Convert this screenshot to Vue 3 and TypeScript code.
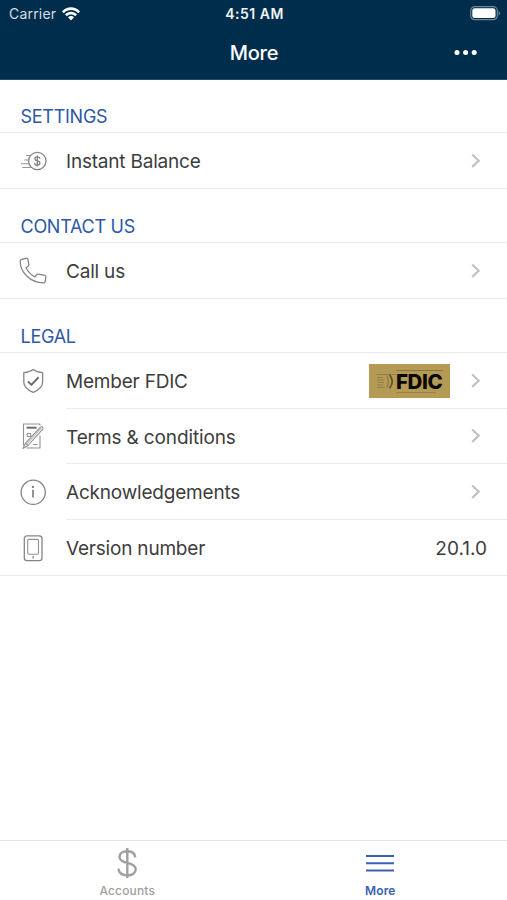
<script setup lang="ts">
type Icon = 'balance' | 'phone' | 'shield' | 'terms' | 'info' | 'device'

interface Item {
  label: string
  icon: Icon
  key: string
  badge?: boolean
  value?: string
}

interface Section {
  title: string
  key: string
  items: Item[]
}

const sections: Section[] = [
  { title: 'SETTINGS', key: 'settings', items: [{ label: 'Instant Balance', icon: 'balance', key: 'instant' }] },
  { title: 'CONTACT US', key: 'contact', items: [{ label: 'Call us', icon: 'phone', key: 'call' }] },
  {
    title: 'LEGAL',
    key: 'legal',
    items: [
      { label: 'Member FDIC', icon: 'shield', key: 'fdic', badge: true },
      { label: 'Terms & conditions', icon: 'terms', key: 'terms' },
      { label: 'Acknowledgements', icon: 'info', key: 'ack' },
      { label: 'Version number', icon: 'device', key: 'version', value: '20.1.0' },
    ],
  },
]
</script>

<template>
  <div class="screen">
    <header class="header">
      <div class="status">
        <div class="carrier">
          <span class="carrier-name">Carrier</span>
          <svg class="wifi" width="18" height="14" viewBox="0 0 18 14">
            <path d="M0 4.4C5-1.1 13-1.1 18 4.4L16.2 6.3C12.2 2 5.8 2 1.8 6.3Z" />
            <path d="M3 7.3C6.3 3.9 11.7 3.9 15 7.3L13.2 9.2C10.9 6.8 7.1 6.8 4.8 9.2Z" />
            <path d="M6 10.3C7.6 8.7 10.4 8.7 12 10.3L9 13.5Z" />
          </svg>
        </div>
        <span class="clock">4:51 AM</span>
        <svg class="battery" width="31" height="15" viewBox="0 0 31 15">
          <rect x="0.7" y="0.7" width="26.6" height="13" rx="4" fill="none" stroke="#6f8799" stroke-width="1.2" />
          <rect x="2.3" y="2.3" width="23.2" height="9.8" rx="2.5" fill="#fff" />
          <path d="M28.6 5v4.6q1.500-.8 1.500-2.300T28.600 5z" fill="#6f8799" />
        </svg>
      </div>
      <div class="title-bar">
        <h1 class="title">More</h1>
        <svg class="dots" width="24" height="6" viewBox="0 0 24 6">
          <circle cx="3" cy="2.5" r="2.5" /><circle cx="11.600" cy="2.5" r="2.5" /><circle cx="20.200" cy="2.5" r="2.5" />
        </svg>
      </div>
    </header>

    <main class="content">
      <section v-for="section in sections" :key="section.key" class="section">
        <h2 class="heading">{{ section.title }}</h2>
        <ul class="list">
          <li v-for="item in section.items" :key="item.key" :class="['item', 'item-' + item.key]">
            <div class="icon-cell">
              <svg v-if="item.icon === 'balance'" width="28" height="28" viewBox="0 0 28 28" class="icon">
                <circle cx="18.300" cy="14" r="8.700" class="strong" />
                <path d="M7.200 8.500h4.900M5.200 13h5.100M2 16.700h8.400M3.300 20.500h9" />
                <path class="strong" d="M20.800 11.700c0-1.200-1-1.900-2.500-1.900s-2.500.8-2.500 2 .8 1.700 2.500 2.100 2.600.9 2.600 2.200-1.100 2.100-2.600 2.100-2.700-.8-2.700-2.200M18.300 8.400v11.200" />
              </svg>
              <svg v-else-if="item.icon === 'phone'" width="28" height="28" viewBox="0 0 28 28" class="icon">
                <path class="strong" d="M2.300 2.500 7.200 1.300q1.400-.3 1.700 1.100l1 5.200q.2 1-.7 1.600L7 10.800q3 6 8.900 9.100l1.600-2.100q.7-.9 1.700-.7l6.500 1.200q1.500.3 1.200 1.900l-.8 4.400q-.3 1.500-1.900 1.300C11.100 25.600 1 15 1.200 4.200q0-1.300 1.100-1.700z" />
              </svg>
              <svg v-else-if="item.icon === 'shield'" width="28" height="28" viewBox="0 0 28 28" class="icon">
                <path class="strong" d="M14.200 2.500C11.400 4.700 8.200 5.500 4.800 5.600v9.600c0 4.800 4.200 7.900 9.400 10.200 5.200-2.300 9.400-5.400 9.400-10.200V5.600C20.200 5.500 17 4.700 14.200 2.500z" />
                <path class="check" d="m8.900 14.400 3.500 3.500 7.200-7.600" />
              </svg>
              <svg v-else-if="item.icon === 'terms'" width="28" height="28" viewBox="0 0 28 28" class="icon">
                <path d="M20.900 3.500V2H4.500v21.500M21 13.500V26H7.500" />
                <path class="check" d="M7.600 5.700h10" />
                <path d="M8.200 11.500h3.500v3H8.200zM14 22.500h4.500" />
                <path fill="#fff" d="M4 26.500 6.300 21.400 20.900 5.600q1.200-1.100 2.500-.7.900.9.200 2.500L9 23.500zM6.300 21.400 9 23.500" />
                <path class="pen-core" d="M7.800 22 22.200 6.200" />
              </svg>
              <svg v-else-if="item.icon === 'info'" width="28" height="28" viewBox="0 0 28 28" class="icon">
                <circle class="strong" cx="14.200" cy="14.300" r="12.100" />
                <path class="info-stem" d="M14 11.800v7.700" /><circle class="dot" cx="14" cy="8.900" r="1.150" />
              </svg>
              <svg v-else width="28" height="28" viewBox="0 0 28 28" class="icon">
                <rect class="strong" x="5.300" y="1.900" width="17.700" height="24.700" rx="2.600" />
                <rect x="8.700" y="5.400" width="10.800" height="14.800" rx="1.200" />
                <path class="strong" d="M14.200 22v2.500" />
              </svg>
            </div>
            <div class="item-body">
              <span class="label">{{ item.label }}</span>
              <div v-if="item.badge" class="fdic">
                <svg class="seal" width="20" height="26" viewBox="0 0 20 26">
                  <path d="M0.500 6.500h19.500M1 9.500h6M1 12h7M2 14.500h6M1 17h6M1 19.500h8" />
                  <path class="arc-soft" d="M10.500 7.500q4 5.700 0 12" />
                  <path class="arc" d="M13.500 6.800q5.500 6.700 0 13.400" />
                </svg>
                <div class="fdic-mark">
                  <i class="rule"></i><strong class="fdic-text">FDIC</strong><i class="rule lower"></i>
                </div>
              </div>
              <span v-if="item.value" class="value">{{ item.value }}</span>
              <svg v-else class="chevron" width="10" height="16" viewBox="0 0 10 16"><path d="m1.200 1.500 6.500 6.200-6.500 6.200" /></svg>
            </div>
          </li>
        </ul>
      </section>
    </main>

    <nav class="tabs">
      <a class="tab">
        <svg width="22" height="32" viewBox="0 0 22 32" class="tab-icon dollar">
          <path d="M19.200 10.400c-.3-4-3.500-6.100-8-6.100-4.700 0-7.700 2.200-7.700 5.600 0 3.500 2.900 4.800 7.800 5.900 5.400 1.200 8.400 2.900 8.400 6.500 0 3.700-3.400 6-8.300 6-5.100 0-8.700-2.300-9-6.600M11.300 1v30" />
        </svg>
        <span class="tab-label">Accounts</span>
      </a>
      <a class="tab active">
        <svg width="30" height="32" viewBox="0 0 30 32" class="tab-icon"><path d="M1 9h28M1 16.300h28M1 23.600h28" /></svg>
        <span class="tab-label more-label">More</span>
      </a>
    </nav>
  </div>
</template>

<style>
body {
  margin: 0;
  background: #fff;
}
</style>

<style scoped>
.screen {
  display: flex;
  flex-direction: column;
  box-sizing: border-box;
  width: 100%;
  height: 900px;
  overflow: hidden;
  background: #fff;
  color: #3d3d3d;
  font-family: Inter, "Liberation Sans", sans-serif;
}
.header {
  height: 80px;
  flex: none;
  box-sizing: border-box;
  background: #002d4b;
  border-bottom: 1px solid #294d66;
  color: #fff;
}
.status {
  display: grid;
  grid-template-columns: 1fr auto 1fr;
  align-items: center;
  height: 27px;
  padding: 0 7px 0 9px;
}
.carrier {
  display: flex;
  align-items: center;
  gap: 6px;
}
.carrier-name {
  font-size: 14px;
  line-height: 20px;
  letter-spacing: 0.2px;
  color: #d5dfe6;
}
.wifi {
  fill: #fff;
}
.clock {
  font-size: 14px;
  font-weight: 600;
  letter-spacing: 0.5px;
  color: #eef3f6;
}
.battery {
  justify-self: end;
  margin-right: -1px;
}
.title-bar {
  display: grid;
  grid-template-columns: 1fr auto 1fr;
  align-items: center;
  height: 52px;
  padding: 0 28px;
}
.title {
  grid-column: 2;
  margin: 0;
  padding-left: 1px;
  font-size: 20px;
  font-weight: 500;
  line-height: 28px;
  letter-spacing: -0.2px;
}
.dots {
  justify-self: end;
  margin-right: 1px;
  fill: #fff;
}
.content {
  flex: 1;
}
.heading {
  display: flex;
  align-items: flex-end;
  box-sizing: border-box;
  height: 54px;
  margin: 0;
  padding: 0 20.5px 3px;
  border-bottom: 1px solid #ebebeb;
  font-size: 18px;
  font-weight: 400;
  line-height: 24px;
  letter-spacing: -0.27px;
  color: #2b58a8;
}
.section:first-child .heading {
  height: 53px;
}
.list {
  margin: 0;
  padding: 0;
  list-style: none;
}
.item {
  display: flex;
  height: 56px;
}
.item-terms {
  height: 55px;
}
.icon-cell {
  display: flex;
  align-items: center;
  width: 66px;
  flex: none;
  box-sizing: border-box;
  padding-left: 19px;
  border-bottom: 1px solid transparent;
}
.item:last-child .icon-cell {
  border-bottom-color: #ebebeb;
}
.item-body {
  display: flex;
  align-items: center;
  flex: 1;
  box-sizing: border-box;
  padding-right: 20px;
  border-bottom: 1px solid #ebebeb;
}
.label {
  flex: 1;
  padding-top: 2px;
  font-size: 19px;
  line-height: 26px;
  letter-spacing: -0.2px;
}
.item-terms .label {
  padding-top: 3px;
  letter-spacing: -0.13px;
}
.value {
  padding-top: 2px;
  font-size: 19px;
  line-height: 26px;
}
.icon {
  fill: none;
  stroke: #929292;
  stroke-width: 1.1;
  stroke-linejoin: round;
}
.icon .strong {
  stroke: #858585;
  stroke-width: 1.3;
}
.icon .check {
  stroke: #6d6d6d;
  stroke-width: 2;
}
.icon .pen-core {
  stroke: #b5b5b5;
}
.icon .info-stem {
  stroke: #777;
  stroke-width: 1.6;
}
.icon .dot {
  fill: #777;
  stroke: none;
}
.chevron {
  margin-right: 6px;
  fill: none;
  stroke: #c2c2c2;
  stroke-width: 2.2;
}
.fdic {
  display: flex;
  align-items: center;
  box-sizing: border-box;
  width: 81px;
  height: 34px;
  margin-right: 21px;
  padding-left: 7px;
  background: #b59a56;
  color: #090805;
}
.seal {
  flex: none;
  fill: none;
  stroke: #8f7a44;
  stroke-width: 0.9;
}
.seal .arc {
  stroke: #5d4e2a;
  stroke-width: 1.6;
}
.seal .arc-soft {
  stroke: #8f7a44;
  stroke-width: 1.3;
}
.fdic-mark {
  display: flex;
  flex-direction: column;
  width: 47px;
  padding-top: 1px;
}
.rule {
  height: 1px;
  background: #8a7540;
}
.rule.lower {
  width: 40px;
  margin-top: 1px;
  background: #9a8248;
}
.fdic-text {
  padding-top: 2px;
  font-size: 20.5px;
  font-weight: 800;
  line-height: 18px;
  letter-spacing: -0.4px;
}
.tabs {
  display: grid;
  grid-template-columns: 1fr 1fr;
  flex: none;
  box-sizing: border-box;
  height: 60px;
  padding-top: 6px;
  border-top: 1px solid #e5e5e5;
}
.tab {
  display: flex;
  flex-direction: column;
  align-items: center;
  color: #a0a0a0;
}
.tab.active {
  color: #3a62b0;
}
.tab-icon {
  fill: none;
  stroke: currentColor;
  stroke-width: 2;
}
.dollar {
  stroke-width: 2.4;
}
.tab-label {
  margin-top: 4px;
  padding-left: 1px;
  font-size: 12px;
  font-weight: 500;
  line-height: 16px;
  letter-spacing: 0.15px;
}
.more-label {
  padding-left: 0;
  font-weight: 600;
}
</style>
